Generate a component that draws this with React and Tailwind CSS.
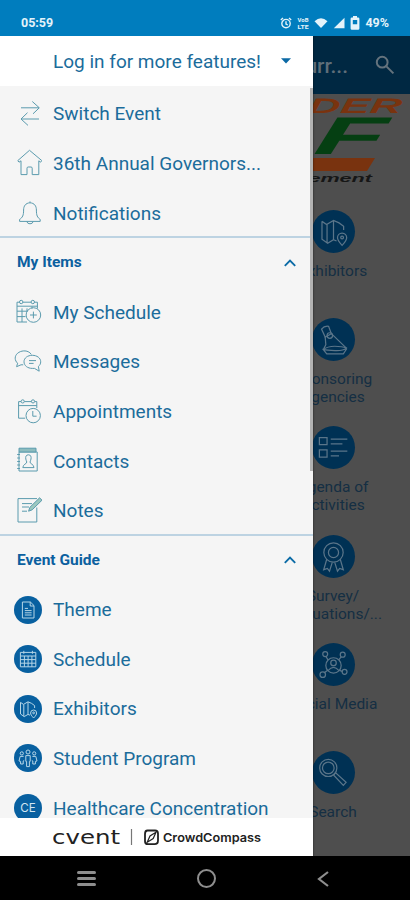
import React, { useState } from 'react';

const SwitchIcon = () => (
    <path d="M7 7.8H25M18.3 1.5L25.3 7.8L19 13.8M25 19H7.3M13.5 12.7L7 19L14 25.4" />
);

const HomeIcon = () => (
    <path d="M15.5 1.3L3.8 11.6L5 13.2L7 11.8V25.6H13V19.2Q13 18 14.2 18H17Q18.2 18 18.2 19.2V25.6H24.8V11.8L26.6 13.2L27.8 11.6Z" />
);

const BellIcon = () => (
    <>
        <path d="M16 2.4V3.8C11.5 4 9.6 7.2 9.6 11C9.6 16.5 8.6 18.4 5.6 20.4V22.4H26.2V20.4C23.3 18.4 22.4 16.5 22.4 11C22.4 7.2 20.5 4 16 3.8" />
        <path d="M12.8 22.6Q13.4 24.8 16 24.8Q18.6 24.8 19.2 22.6" />
    </>
);

const MyScheduleIcon = () => (
    <>
        <path d="M5.5 4.2H3V24H13M9 4.2H17M20.5 4.2H23.4V10.5M3 8.2H23.4M3 13.2H13.5M3 18.6H11.5M8 10.4V24M13 10.4V13.5M18 8.5V10.5" />
        <circle cx="7.2" cy="4" r="1.7" />
        <circle cx="18.8" cy="4" r="1.7" />
        <circle cx="19.4" cy="17" r="7.3" />
        <path d="M19.4 13.6V20.4M16 17H22.8" />
    </>
);

const MessagesIcon = () => (
    <>
        <path d="M17.3 6.4C15.8 4 12.9 2.7 9.8 2.9C4.9 3.2 1.2 6.3 1.2 10.2C1.2 12.2 2.2 14 3.6 15.2L2.6 18.7L7 16.8H9.2" />
        <path d="M24.4 18.4C26 17.2 26.7 15.6 26.7 13.8C26.7 10 23 7.3 18.3 7.3C13.6 7.3 10 10 10 13.8C10 17.6 13.6 20.4 18.3 20.4H20.5L25.2 23.2Z" />
        <path d="M15 12.6H22M15 15.4H19.6" />
    </>
);

const AppointmentsIcon = () => (
    <>
        <path d="M7 4.6H4.6V21.2H11.2M10.4 4.6H17.4M20.8 4.6H22.8V11M4.6 8.6H22.8" />
        <circle cx="8.7" cy="4.4" r="1.6" />
        <circle cx="19" cy="4.4" r="1.6" />
        <circle cx="19.2" cy="18.6" r="7.2" />
        <path d="M18.8 14V19.2H22.6" />
    </>
);

const ContactsIcon = () => (
    <>
        <path d="M5 5V24H23.2V5Z" />
        <path d="M5 1.2H22V5H5Z" className="fill-[#8dbcbe]" />
        <path d="M3.2 7.5H6M3.2 11H6M3.2 14.5H6M3.2 18H6M3.2 21.5H6" />
        <path d="M14.4 7.8C12 7.8 11.4 9.8 11.8 12C12 13.4 12.6 14.2 12.8 15C12.9 17 9 17 8.8 20.6H20C19.8 17 15.9 17 16 15C16.2 14.2 16.8 13.4 17 12C17.4 9.8 16.8 7.8 14.4 7.8Z" />
    </>
);

const NotesIcon = () => (
    <>
        <path d="M23 2.6H4V26H22.8V11.5M8 7.6H18M8 11H15M8 15.2H13" />
        <path d="M14.6 15.2L15.8 11.4L25.6 1.8L28 4.2L18.2 13.8Z" className="fill-[#9cc8bf]" />
    </>
);

const ThemeIcon = () => (
    <>
        <path d="M8.4 6H16.4L20 9.6V22H8.4ZM16.2 6V10H20" />
        <path d="M10.8 12.4H14M10.8 14.6H17.6M10.8 16.8H17.6M10.8 19H17.6" />
    </>
);

const ScheduleIcon = () => (
    <>
        <path d="M6.4 7.4H21.8V21.8H6.4ZM6.4 11H21.8M6.4 14.6H21.8M6.4 18.2H21.8M10.4 11V21.8M14.1 11V21.8M17.9 11V21.8" />
        <path d="M9.8 5.8V8.8M18.4 5.8V8.8" />
    </>
);

const MapIcon = () => (
    <>
        <path d="M6.5 7.4L9.5 9.4L14 6.8L17.6 8.4L20.6 10.6V13M6.5 7.4V19L10.2 21.6L14 19.4L16 20.2M9.8 9.6V21.2M14 7V19.2" />
        <path d="M19.6 23C17.4 20.6 16.6 19.4 16.6 18A3 3 0 0 1 22.6 18C22.6 19.4 21.8 20.6 19.6 23Z" />
        <circle cx="19.6" cy="17.9" r="0.9" />
    </>
);

const PeopleIcon = () => (
    <>
        <circle cx="14" cy="8" r="2" />
        <path d="M11.8 11.6H16.2V17.4H15.4V22.6H12.6V17.4H11.8Z" />
        <circle cx="7.8" cy="9.4" r="1.6" />
        <path d="M9.6 12.4H6.2L5 17L6.6 17.4V20H9.2V17L10.2 16.4" />
        <circle cx="20.2" cy="9.4" r="1.6" />
        <path d="M18.4 12.4H21.8L23 17L21.4 17.4V20H18.8V17L17.8 16.4" />
    </>
);

const CeIcon = () => (
    <text x="14" y="18.3" textAnchor="middle" textLength="15.5" lengthAdjust="spacingAndGlyphs" fontSize="11.5" stroke="none" className="fill-[#d3e6f1] font-['Inter',sans-serif]">CE</text>
);

const SponsorIcon = () => (
    <>
        <path d="M6.2 7.2Q8 5 10.8 5.4L12.6 10.2L8.6 12.4Z" />
        <path d="M8.6 12.4L9 17.4L7.4 20.6M12.6 10.2L22.4 19.6" />
        <circle cx="11.6" cy="11.4" r="1.8" />
        <path d="M7.4 20.6Q10 18.4 14.8 18.4T22.4 19.6Q20.4 21.4 15 21.2T7.4 20.6L9.6 23.4H20.4L22.6 20" />
    </>
);

const AgendaIcon = () => (
    <>
        <path d="M4.8 7.6H9.8V12.2H4.8ZM4.8 15.6H9.8V20.2H4.8Z" />
        <path d="M12.2 8.6H23M12.2 11.6H19.8M12.2 16.4H23M12.2 19.4H17.6" />
    </>
);

const RibbonIcon = () => (
    <>
        <circle cx="14" cy="11.4" r="6.3" />
        <circle cx="14" cy="11.4" r="3.3" />
        <path d="M9.6 15.8L7.6 22.6L10 21.8L11.4 23.6L13.2 17.8M18.4 15.8L20.4 22.6L18 21.8L16.6 23.6L14.8 17.8" />
    </>
);

const SocialIcon = () => (
    <>
        <circle cx="14" cy="14.6" r="5" />
        <circle cx="14" cy="13" r="1.8" />
        <path d="M10.4 18Q14 13.6 17.6 18M10.4 11L9 8.6M17.4 11L19 9M10.2 17.8L8 19.4M18 17.8L20 18.6" />
        <circle cx="8.6" cy="7.2" r="1.6" />
        <circle cx="20" cy="7.6" r="1.6" />
        <circle cx="7" cy="20.6" r="1.8" />
        <circle cx="21.2" cy="18.8" r="1.6" />
    </>
);

const SearchIcon = () => (
    <>
        <circle cx="10.6" cy="11" r="5.6" />
        <circle cx="10.6" cy="11" r="3.8" />
        <path d="M14 15.6L15.4 14.2L22.2 20.4L20.4 22.4Z" />
    </>
);

const shortcuts = [
    { label: 'Switch Event', icon: SwitchIcon },
    { label: '36th Annual Governors...', icon: HomeIcon },
    { label: 'Notifications', icon: BellIcon }
];

const myItems = [
    { label: 'My Schedule', icon: MyScheduleIcon },
    { label: 'Messages', icon: MessagesIcon },
    { label: 'Appointments', icon: AppointmentsIcon },
    { label: 'Contacts', icon: ContactsIcon },
    { label: 'Notes', icon: NotesIcon }
];

const eventGuide = [
    { label: 'Theme', icon: ThemeIcon },
    { label: 'Schedule', icon: ScheduleIcon },
    { label: 'Exhibitors', icon: MapIcon },
    { label: 'Student Program', icon: PeopleIcon },
    { label: 'Healthcare Concentration', icon: CeIcon }
];

const tiles = [
    { lines: ['Exhibitors'], icon: MapIcon },
    { lines: ['Sponsoring', 'Agencies'], icon: SponsorIcon },
    { lines: ['Agenda of', 'Activities'], icon: AgendaIcon },
    { lines: ['Survey/', 'Evaluations/...'], icon: RibbonIcon },
    { lines: ['Social Media'], icon: SocialIcon },
    { lines: ['Search'], icon: SearchIcon }
];

const MenuRow = ({ item, filled }) => {
    const Icon = item.icon;
    return (
        <button className="flex h-[49.6px] w-full shrink-0 items-center gap-[11px] pl-3.5 text-left">
            <svg
                viewBox="0 0 28 28"
                fill="none"
                strokeWidth="1"
                className={`size-7 shrink-0 ${filled ? 'rounded-full bg-[#0860a0] stroke-[#b5d5e6]' : 'stroke-[#5b9bae]'}`}
            >
                <Icon />
            </svg>
            <span className="whitespace-nowrap pt-0.5 text-[19px] text-[#1b6c9b]">{item.label}</span>
        </button>
    );
};

const Section = ({ title, items, filled }) => {
    const [open, setOpen] = useState(true);
    return (
        <div className="flex shrink-0 flex-col">
            <button
                onClick={() => setOpen(!open)}
                className="-mt-[1.6px] flex h-[51.2px] shrink-0 items-center justify-between border-t-2 border-[#bdd3e2] pl-[17px] pr-[17px]"
            >
                <span className="text-[15.5px] font-bold text-[#0b609f]">{title}</span>
                <svg viewBox="0 0 12 8" fill="none" className={`h-2 w-3 stroke-[#0b6ba6] ${open ? '' : 'rotate-180'}`} strokeWidth="1.9">
                    <path d="M0.8 6.8L6 1.6L11.2 6.8" />
                </svg>
            </button>
            {open && items.map((item) => <MenuRow key={item.label} item={item} filled={filled} />)}
        </div>
    );
};

const StatusBar = () => (
    <div className="flex h-9 shrink-0 items-center justify-between bg-[#007dbe] pl-[21px] pr-[21px] pt-[10px] text-[#e4f3fa]">
        <span className="text-[12.5px] font-bold">05:59</span>
        <div className="flex items-center gap-[5px]">
            <svg viewBox="0 0 12 12" className="size-3 fill-none stroke-current" strokeWidth="1.4">
                <circle cx="6" cy="6.6" r="4.2" />
                <path d="M6 4.2V7L7.8 8M0.8 3L3 1M11.2 3L9 1" />
            </svg>
            <svg viewBox="0 0 12 12" className="size-3 fill-current font-['Roboto',sans-serif] font-bold">
                <text x="0.5" y="5.2" fontSize="6.2" textLength="11" lengthAdjust="spacingAndGlyphs">VoB</text>
                <text x="0.5" y="11.6" fontSize="6.2" textLength="11" lengthAdjust="spacingAndGlyphs">LTE</text>
            </svg>
            <svg viewBox="0 0 14 12" className="h-3 w-3.5 fill-current">
                <path d="M0.5 4.2Q7 -1.6 13.5 4.2L7 11Z" />
            </svg>
            <svg viewBox="0 0 12 12" className="size-3 fill-current">
                <path d="M11.5 0.8V11.3H0.8Z" />
            </svg>
            <svg viewBox="0 0 10 14" className="h-3.5 w-2.5 fill-current">
                <path fillRule="evenodd" d="M3 0H7V1.4H8Q9.4 1.4 9.4 2.8V12.4Q9.4 13.8 8 13.8H2Q0.6 13.8 0.6 12.4V2.8Q0.6 1.4 2 1.4H3ZM2.8 4V8.2H7.2V4Z" />
            </svg>
            <span className="text-[12.5px] font-bold">49%</span>
        </div>
    </div>
);

const Drawer = () => (
    <aside className="absolute inset-y-0 left-0 flex w-[313px] flex-col bg-[#f5f5f5] shadow-[0_0_2px_rgba(0,0,0,0.6)]">
        <button className="flex h-[50px] shrink-0 items-center justify-between bg-white pl-[53px] pr-[21px]">
            <span className="whitespace-nowrap pt-[3px] text-[19px] text-[#1b6c9b]">Log in for more features!</span>
            <svg viewBox="0 0 12 6" className="h-1.5 w-3 fill-[#0b69a5]">
                <path d="M1 0.3H11L6 5.6Z" />
            </svg>
        </button>
        <div className="relative flex min-h-0 flex-1 flex-col overflow-hidden pt-[2.8px]">
            {shortcuts.map((item) => <MenuRow key={item.label} item={item} />)}
            <Section title="My Items" items={myItems} />
            <Section title="Event Guide" items={eventGuide} filled />
            {/* Scroll thumb */}
            <div className="absolute right-0 top-0.5 h-[383px] w-[3px] bg-[#b3b3b3]"></div>
        </div>
        <footer className="flex h-[38px] shrink-0 items-center bg-white pl-[53px]">
            <svg viewBox="0 0 210 38" className="h-[38px] w-[210px] fill-[#222]">
                <text x="-1" y="25.6" fontSize="19" textLength="68" lengthAdjust="spacingAndGlyphs" className="font-['DejaVu_Sans',sans-serif]">cvent</text>
                <path d="M78.5 11V27" stroke="#777" strokeWidth="1.2" />
                <path d="M94.5 12.5H102Q105 12.5 105 15.5V22.5Q105 26.2 101.5 26.2H95Q92 26.2 92 23.2V16Q92 12.5 94.5 12.5Z" fill="none" stroke="#222" strokeWidth="1.8" />
                <path d="M94.2 24.2L97 18L103 14.2L100.2 20.6Z" fill="none" stroke="#222" strokeWidth="1.2" />
                <text x="110" y="23.8" fontSize="12" fontWeight="600" textLength="98" lengthAdjust="spacingAndGlyphs" className="font-['Inter',sans-serif]">CrowdCompass</text>
            </svg>
        </footer>
    </aside>
);

const EventHome = () => (
    <div className="flex h-full flex-col bg-[#4e4e4e]">
        <header className="flex h-[58px] shrink-0 items-center justify-end gap-[27px] bg-[#002842] pr-[15px]">
            <span className="pt-1 text-[21px] font-medium text-[#5f6e79]">Hurr...</span>
            <svg viewBox="0 0 20 20" fill="none" className="size-5 stroke-[#64737d]" strokeWidth="2">
                <circle cx="7.2" cy="7.2" r="5.4" />
                <path d="M11.4 11.4L18.4 18.4" />
            </svg>
        </header>
        <svg viewBox="0 0 410 94" className="h-[94px] w-full shrink-0 font-['Liberation_Sans',sans-serif]">
            <text transform="translate(219 19) skewX(-8) scale(1.7 1)" fontSize="21" fontWeight="bold" fontStyle="italic" textLength="107" lengthAdjust="spacingAndGlyphs" className="fill-[#79330f]">LEADER</text>
            <text transform="translate(312.5 59.5) skewX(-12) scale(2.15 1)" fontSize="53" fontWeight="bold" fontStyle="italic" className="fill-[#053f12]">F</text>
            <path d="M300 64H375L367 77H300Z" className="fill-[#79330f]" />
            <text x="240" y="88" fontSize="10" fontWeight="bold" fontStyle="italic" textLength="132" lengthAdjust="spacingAndGlyphs" className="fill-[#161616]">Management</text>
        </svg>
        <div className="ml-[256px] flex w-[154px] flex-col pt-[21.5px]">
            {tiles.map((tile) => {
                const Icon = tile.icon;
                return (
                    <div key={tile.lines[0]} className="flex h-[108.4px] shrink-0 flex-col items-center">
                        <svg viewBox="0 0 28 28" fill="none" strokeWidth="0.8" className="size-[43px] shrink-0 rounded-full bg-[#003154] stroke-[#5a7589]">
                            <Icon />
                        </svg>
                        <div className="mt-[9px] text-center text-[15.5px] leading-[18px] text-[#152f43]">
                            {tile.lines.map((line) => <div key={line} className="whitespace-nowrap">{line}</div>)}
                        </div>
                    </div>
                );
            })}
        </div>
    </div>
);

const NavBar = () => (
    <nav className="flex h-11 shrink-0 items-center justify-between bg-black pl-[77px] pr-[81px] pt-px text-[#8e8e8e]">
        <div className="flex w-[19px] flex-col gap-[3px]">
            <span className="h-[3px] rounded-sm bg-current"></span>
            <span className="h-[3px] rounded-sm bg-current"></span>
            <span className="h-[3px] rounded-sm bg-current"></span>
        </div>
        <div className="size-[19px] rounded-full border-2 border-current"></div>
        <svg viewBox="0 0 12 16" fill="none" className="h-4 w-3 stroke-current" strokeWidth="2.2">
            <path d="M11 1L2 8L11 15" />
        </svg>
    </nav>
);

const App = () => (
    <div className="flex h-[900px] w-[410px] flex-col overflow-hidden font-['Roboto',sans-serif]">
        <StatusBar />
        <main className="relative min-h-0 flex-1 overflow-hidden">
            <EventHome />
            <Drawer />
        </main>
        <NavBar />
    </div>
);

export default App;
